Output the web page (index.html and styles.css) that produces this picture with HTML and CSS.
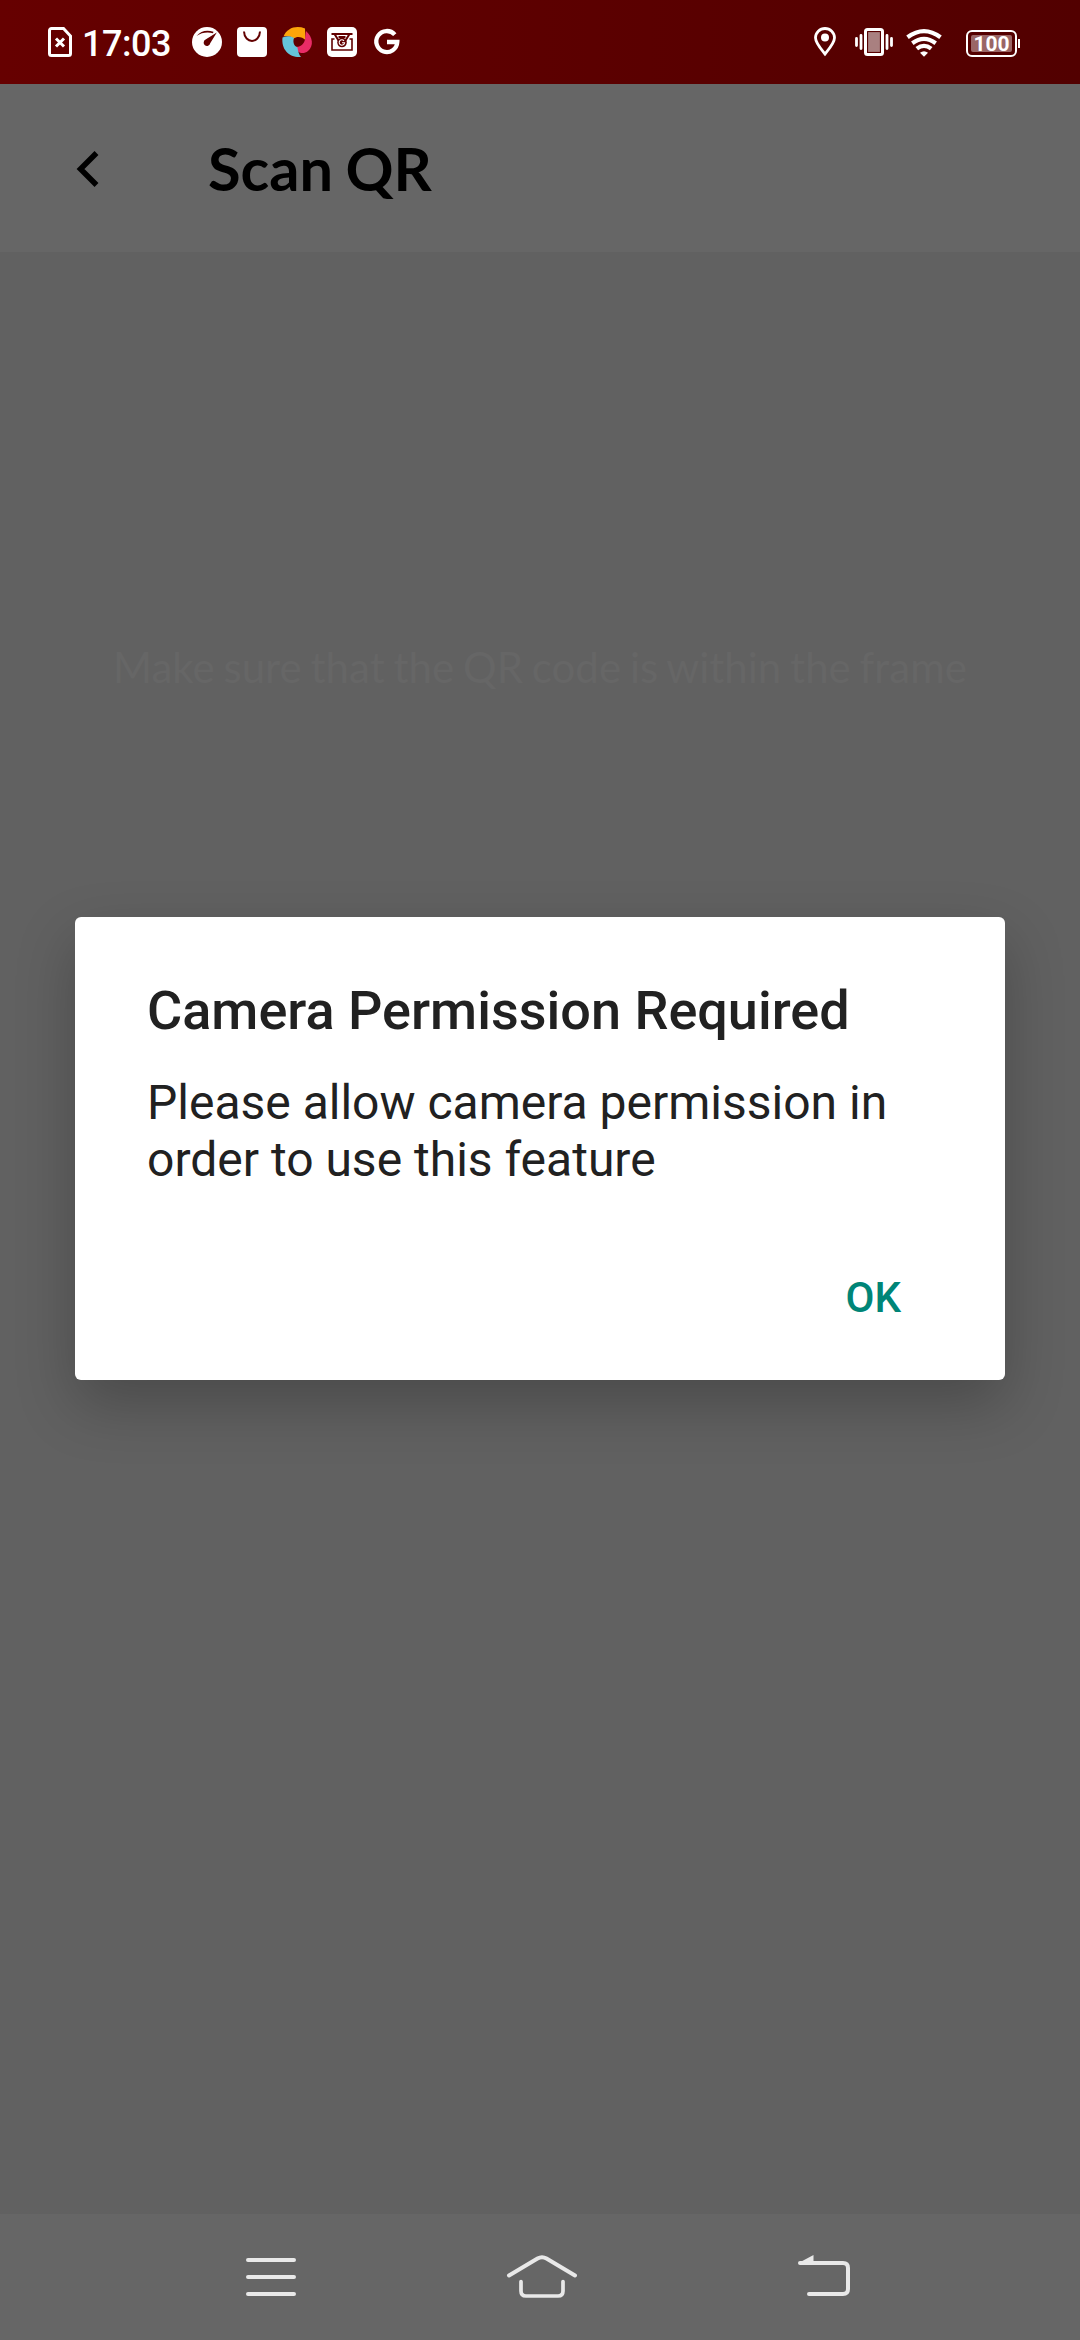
FILE: index.html
```html
<!DOCTYPE html>
<html lang="en">
<head>
<meta charset="utf-8">
<title>Scan QR</title>
<link rel="stylesheet" href="styles.css">
</head>
<body>
<div class="screen">
  <header class="status-bar">
    <svg class="icon-sim" width="24" height="30" viewBox="0 0 24 30"><path d="M3.5 1.5H15.5L22.5 9V26.5a2 2 0 0 1-2 2h-17a2 2 0 0 1-2-2v-23a2 2 0 0 1 2-2z" fill="none" stroke="#fff" stroke-width="3"/><path d="M8 11.5l8 8M16 11.5l-8 8" stroke="#fff" stroke-width="3"/></svg>
    <span class="clock">17:03</span>
    <div class="notifications">
      <svg width="30" height="30" viewBox="0 0 30 30"><circle cx="15" cy="15" r="15" fill="#fff"/><path d="M4.500 9Q11 1.500 21.500 4.800L21 6.200Q12 4 4.500 9z" fill="#620000"/><path d="M24.800 5.500L18.200 16.200a3.300 3.300 0 1 1-4.600-3.600z" fill="#620000"/></svg>
      <svg width="30" height="30" viewBox="0 0 30 30"><rect width="30" height="30" rx="4" fill="#fff"/><path d="M7 4.500c.5 12.500 15.500 12.500 16 0" fill="none" stroke="#620000" stroke-width="2"/></svg>
      <svg width="30" height="30" viewBox="0 0 30 30"><path d="M1.500 9.500C5 1 14-2 23 1.500L23.500 13C20 9.500 15 9 11.500 11.500 8 9 5 8.500 1.500 9.500z" fill="#fda50a"/><path d="M24 4C31 10 32 19 26 24 21 28 15 26 12 19.500 18 21 22.500 17 23 12z" fill="#e92c66"/><path d="M0.500 10.500C5 8.500 9 9 12 11 10.500 15 12 19 15.500 20.500 16 24 17 28 19 30 8 31-1 23 .5 10.500z" fill="#65c4da"/></svg>
      <svg width="30" height="30" viewBox="0 0 30 30"><rect width="30" height="30" rx="5" fill="#fff"/><path d="M4.500 7H25.500M7.500 7l4 6.500M22.500 7l-4 6.500M11.500 10h7" stroke="#620000" stroke-width="2" fill="none"/><path d="M7.500 12H5V23H25V12h-2.500" fill="none" stroke="#620000" stroke-width="1.600"/><circle cx="15" cy="15.500" r="4.800" fill="#620000"/><path d="M17 13.800a2.700 2.700 0 1 0 .6 2H15" fill="none" stroke="#fff" stroke-width="1.100"/></svg>
      <svg class="icon-g" width="26" height="26" viewBox="0 0 26 26"><path d="M20.800 5.700A10.500 10.500 0 1 0 23.300 13H13" fill="none" stroke="#fff" stroke-width="4.300"/></svg>
    </div>
    <div class="system">
      <svg width="22" height="30" viewBox="0 0 22 30"><path d="M11 27C6.500 21.500 1.500 16 1.500 10.800a9.500 9.300 0 0 1 19 0C20.500 16 15.500 21.500 11 27z" fill="none" stroke="#fff" stroke-width="2.800"/><circle cx="11" cy="10.500" r="4" fill="#fff"/></svg>
      <svg width="38" height="30" viewBox="0 0 38 30"><rect x="10.500" y="2.500" width="17" height="25" rx="2" fill="#a98080"/><rect x="12.500" y="4.500" width="13" height="21" fill="none" stroke="#570000" stroke-width="1.200"/><rect x="10.500" y="2.500" width="17" height="25" rx="2" fill="none" stroke="#fff" stroke-width="3"/><path d="M6 8.500v13M32 8.500v13M1.500 11.500v7M36.500 11.500v7" stroke="#fff" stroke-width="2.800" stroke-linecap="round"/></svg>
      <svg class="icon-wifi" width="36" height="28" viewBox="0 0 36 28"><g fill="none" stroke="#fff" stroke-width="4.200"><path d="M1.500 8.300Q18-4 34.500 8.300"/><path d="M6.300 14.200Q18 5.600 29.700 14.200"/><path d="M10.800 19.700Q18 14 25.200 19.700"/></g><path d="M14 23.800Q18 20.800 22 23.800L18 27.700z" fill="#fff"/></svg>
      <div class="battery"><span class="level">100</span></div>
    </div>
  </header>
  <div class="toolbar">
    <svg class="back" width="22" height="36" viewBox="0 0 22 36"><path d="M19.500 2L3.500 18l16 16" fill="none" stroke="#000" stroke-width="5.500"/></svg>
    <h1 class="page-title">Scan QR</h1>
  </div>
  <main class="scanner">
    <p class="hint">Make sure that the QR code is within the frame</p>
  </main>
  <nav class="nav-bar">
    <svg width="50" height="44" viewBox="0 0 50 44"><path d="M2 5h46M2 22h46M2 39h46" stroke="#e9e9e9" stroke-width="4" stroke-linecap="round"/></svg>
    <svg class="nav-home" width="72" height="44" viewBox="0 0 72 44"><g fill="none" stroke="#e9e9e9" stroke-width="4" stroke-linecap="round"><path d="M3 20.500L31.500 3.500Q36 1 40.500 3.500L69 20.500"/><path d="M15 26.500V36Q15 41 20 41H52Q57 41 57 36V26.500" stroke-width="3.700"/></g></svg>
    <svg width="52" height="44" viewBox="0 0 52 44"><path d="M2 8H45Q50 8 50 13V34Q50 39 45 39H11" fill="none" stroke="#e9e9e9" stroke-width="4" stroke-linecap="round"/><path d="M0.500 8L15.500 0V9H1.500z" fill="#e9e9e9"/></svg>
  </nav>
  <div class="overlay">
    <section class="dialog" role="alertdialog">
      <h2 class="dialog-title">Camera Permission Required</h2>
      <p class="dialog-text">Please allow camera permission in order to use this feature</p>
      <div class="actions"><button class="ok">OK</button></div>
    </section>
  </div>
</div>
</body>
</html>
```

FILE: styles.css
```css
* { box-sizing: border-box; margin: 0; }
body { background: #616161; font-family: Roboto, sans-serif; }
svg { display: block; flex: none; overflow: visible; }
.screen { position: relative; width: 1080px; height: 2340px; display: flex; flex-direction: column; overflow: hidden; }

.status-bar { height: 84px; flex: none; display: flex; align-items: center; padding: 0 60px 0 48px; background: linear-gradient(90deg, #660000, #520000); color: #fff; }
.clock { margin-left: 10px; width: 93px; padding-top: 3px; font-size: 36px; font-weight: 500; line-height: 42px; letter-spacing: -.5px; }
.notifications { display: flex; align-items: center; gap: 15px; margin-left: 17px; }
.icon-g { margin-left: 2px; }
.system { display: flex; align-items: center; margin-left: auto; }
.system svg:nth-child(2) { margin-left: 19px; }
.system .icon-wifi { margin: 2px 0 0 13px; }
.battery { position: relative; width: 51px; height: 27px; margin: 2px 3px 0 24px; padding: 3px; border: 2px solid #fff; border-radius: 6px; }
.battery::after { content: ""; position: absolute; right: -5px; top: 7px; width: 2px; height: 9px; background: #fff; }
.level { display: block; height: 17px; border-radius: 2px; background: #9a6666; font-size: 21px; font-weight: 700; line-height: 18px; text-align: center; }

.toolbar { height: 168px; flex: none; display: flex; align-items: center; padding-left: 77px; background: #666; }
.back { margin-top: 2px; }
.page-title { margin-left: 109px; font: 700 59.5px/72px Lato, sans-serif; word-spacing: -2px; color: #000; }

.scanner { flex: 1; padding-top: 389px; background: #616161; }
.hint { font: 400 42px/52px Lato, sans-serif; word-spacing: -1.9px; color: #666; text-align: center; white-space: nowrap; }

.nav-bar { height: 126px; flex: none; display: flex; justify-content: space-between; align-items: flex-start; padding: 41px 230px 0 246px; background: #666; }
.nav-home { margin-right: 11px; }

.overlay { position: absolute; inset: 0; display: flex; align-items: flex-start; justify-content: center; padding-top: 917px; }
.dialog { width: 930px; height: 463px; padding: 62px 72px 0; background: #fff; border-radius: 6px; box-shadow: 0 24px 60px rgba(0, 0, 0, .24); color: #212121; }
.dialog-title { font-size: 54px; font-weight: 500; line-height: 64px; white-space: nowrap; }
.dialog-text { margin-top: 31px; font-size: 48px; line-height: 57px; }
.actions { display: flex; justify-content: flex-end; margin-top: 85px; padding-right: 32px; }
.ok { padding: 0; border: 0; background: none; color: #008577; font: 500 42px/50px Roboto, sans-serif; }
```
